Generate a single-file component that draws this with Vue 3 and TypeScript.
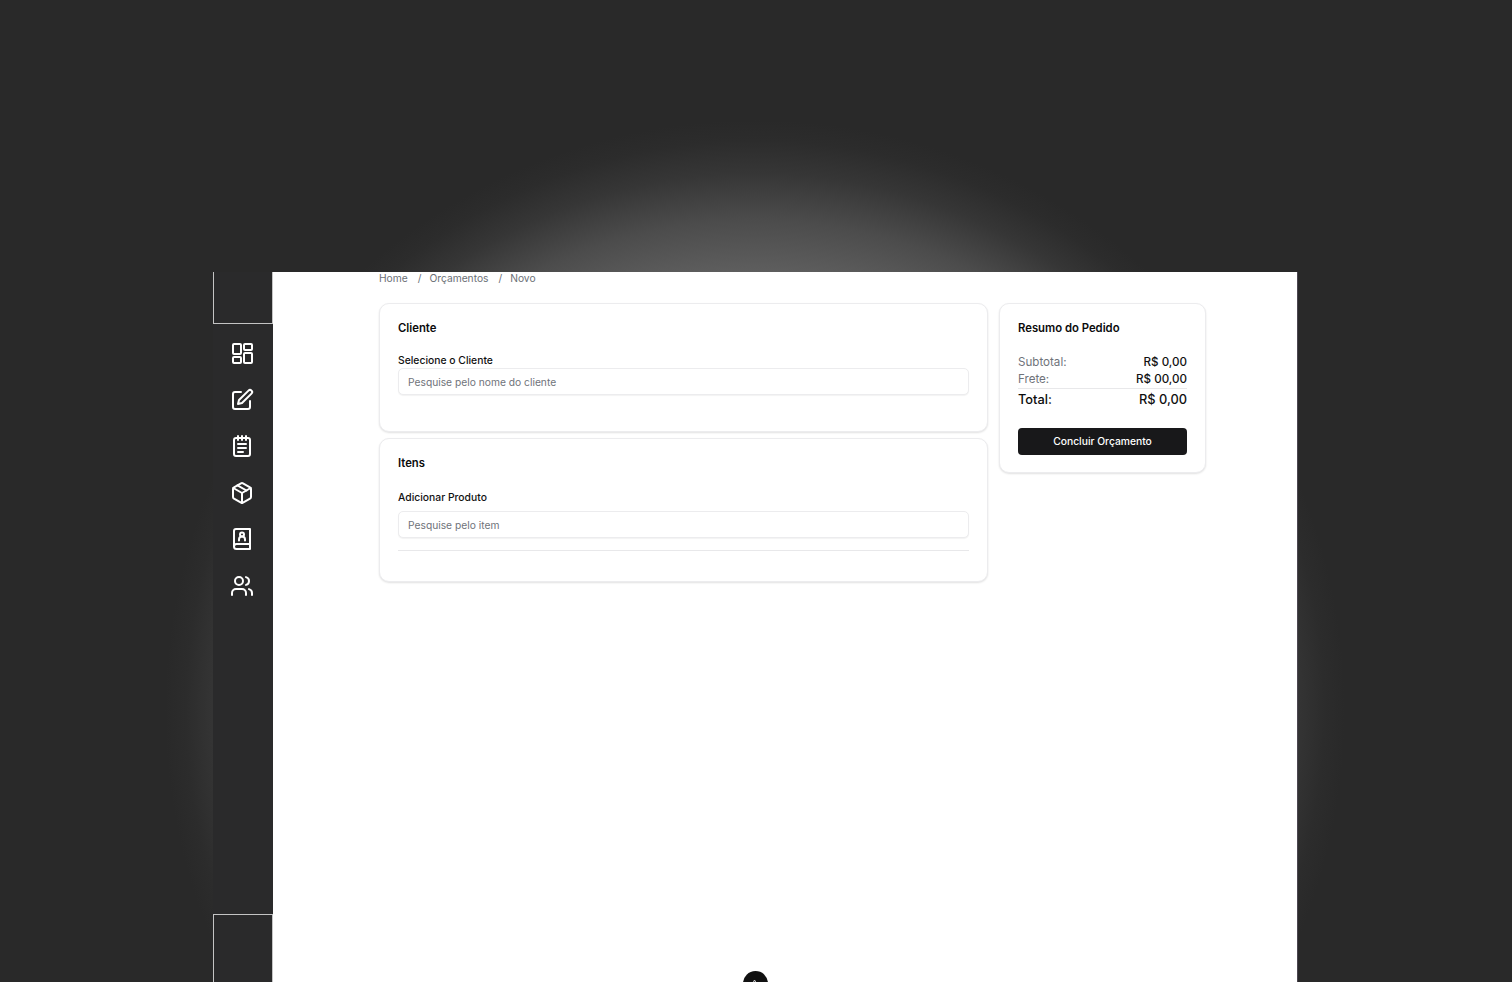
<script setup lang="ts">
const navIcons = [
  ['M4 3h6a1 1 0 0 1 1 1v8a1 1 0 0 1-1 1H4a1 1 0 0 1-1-1V4a1 1 0 0 1 1-1Z', 'M15 3h6a1 1 0 0 1 1 1v4a1 1 0 0 1-1 1h-6a1 1 0 0 1-1-1V4a1 1 0 0 1 1-1Z', 'M15 12h6a1 1 0 0 1 1 1v8a1 1 0 0 1-1 1h-6a1 1 0 0 1-1-1v-8a1 1 0 0 1 1-1Z', 'M4 16h6a1 1 0 0 1 1 1v4a1 1 0 0 1-1 1H4a1 1 0 0 1-1-1v-4a1 1 0 0 1 1-1Z'],
  ['M11 4H5a2 2 0 0 0-2 2v13a2 2 0 0 0 2 2h13a2 2 0 0 0 2-2v-6', 'M18.5 2.6a2.1 2.1 0 0 1 3 3L12 15l-4 1 1-4Z'],
  ['M8 2v4', 'M12 2v4', 'M16 2v4', 'M6 4h12a2 2 0 0 1 2 2v14a2 2 0 0 1-2 2H6a2 2 0 0 1-2-2V6a2 2 0 0 1 2-2Z', 'M8 10h8', 'M8 14h8', 'M8 18h5'],
  ['M11 2.3a2 2 0 0 1 2 0l7 4A2 2 0 0 1 21 8v8a2 2 0 0 1-1 1.7l-7 4a2 2 0 0 1-2 0l-7-4A2 2 0 0 1 3 16V8a2 2 0 0 1 1-1.7Z', 'M3.3 7 12 12l8.7-5', 'M12 22V12', 'm7.5 4.3 9 5.2'],
  ['M4 19.5V4a2 2 0 0 1 2-2h14v20H6.5a2.5 2.5 0 0 1 0-5H20', 'M9 13.5v-1a3 3 0 0 1 6 0v1', 'M12 5.5a2 2 0 1 0 0 4 2 2 0 0 0 0-4Z'],
  ['M16 21v-2a4 4 0 0 0-4-4H6a4 4 0 0 0-4 4v2', 'M9 3a4 4 0 1 0 0 8 4 4 0 0 0 0-8Z', 'M22 21v-2a4 4 0 0 0-3-3.87', 'M16 3.13a4 4 0 0 1 0 7.75'],
]
</script>

<template>
  <div class="page">
    <div class="glow"></div>
    <div class="frame">
      <aside class="sidebar">
        <div class="slot slot-top"></div>
        <nav class="nav">
          <svg v-for="(icon, i) in navIcons" :key="i" class="nav-icon" viewBox="0 0 24 24" fill="none" stroke="currentColor" stroke-width="2" stroke-linecap="round" stroke-linejoin="round">
            <path v-for="d in icon" :key="d" :d="d" />
          </svg>
        </nav>
        <div class="slot slot-bottom"></div>
      </aside>
      <main class="main">
        <div class="crumbs">
          <span>Home</span><i>/</i><span>Orçamentos</span><i>/</i><span>Novo</span>
        </div>
        <div class="columns">
          <div class="left">
            <section class="card card-client">
              <h2>Cliente</h2>
              <label class="label-client">Selecione o Cliente</label>
              <input class="field" placeholder="Pesquise pelo nome do cliente" />
            </section>
            <section class="card card-items">
              <h2>Itens</h2>
              <label class="label-items">Adicionar Produto</label>
              <input class="field" placeholder="Pesquise pelo item" />
              <hr class="rule" />
            </section>
          </div>
          <section class="card card-summary">
            <h2>Resumo do Pedido</h2>
            <div class="rows">
              <div class="row"><span class="muted">Subtotal:</span><b>R$ 0,00</b></div>
              <div class="row"><span class="muted">Frete:</span><b>R$ 00,00</b></div>
              <div class="row total"><span>Total:</span><b>R$ 0,00</b></div>
            </div>
            <button class="submit">Concluir Orçamento</button>
          </section>
        </div>
        <div class="fab">
          <svg viewBox="0 0 24 24" fill="none" stroke="#d8d8d8" stroke-width="2"><path d="M3 20 9 8l4 7 2-3 5 8" /></svg>
        </div>
      </main>
    </div>
  </div>
</template>

<style>
html, body { margin: 0; background: #292929; overflow: hidden; }
</style>

<style scoped>
.page {
  position: relative;
  height: 982px;
  padding: 272px 215px 0 213px;
  box-sizing: border-box;
  overflow: hidden;
  background: #292929;
  font-family: Inter, "Noto Sans", sans-serif;
}
.glow {
  position: absolute;
  left: 165px;
  top: 120px;
  width: 1180px;
  height: 1180px;
  border-radius: 50%;
  background: radial-gradient(circle closest-side, #707070 0%, #666666 70%, #5e5e5e 74.2%, #4c4c4c 83%, #363636 91%, #2c2c2c 96.5%, #292929 100%);
}
.frame {
  position: relative;
  display: flex;
  height: 710px;
}
.sidebar {
  width: 60px;
  flex: none;
  display: flex;
  flex-direction: column;
  background: #2a2a2b;
  color: #fff;
}
.slot {
  box-sizing: border-box;
  width: 60px;
  flex: none;
  border: 1px solid #c4c4c4;
}
.slot-top { height: 52px; border-top: 0; }
.slot-bottom { height: 68px; border-bottom: 0; }
.nav {
  flex: 1;
  display: flex;
  flex-direction: column;
  align-items: center;
  gap: 22.6px;
  padding: 17px 2px 0 0;
}
.nav-icon { width: 24px; height: 24px; flex: none; }
.main {
  position: relative;
  flex: 1;
  background: #fff;
  padding-left: 106px;
  box-shadow: 1px 0 0 #4b4650;
}
.crumbs {
  height: 34px;
  margin-top: -3px;
  font-size: 10.25px;
  line-height: 18px;
  color: #6b6f76;
  display: flex;
  gap: 10px;
}
.crumbs i { font-style: normal; margin-right: -2px; }
.columns { display: flex; gap: 11px; align-items: flex-start; }
.left { width: 609px; display: flex; flex-direction: column; gap: 6px; }
.card {
  box-sizing: border-box;
  border: 1px solid #ececee;
  border-radius: 10px;
  background: #fff;
  box-shadow: 0 1px 2px rgba(0, 0, 0, 0.12);
  padding: 16px 18px 15px;
}
.card-client { height: 129px; }
.card-items { height: 144px; }
.card-summary { width: 207px; height: 170px; }
h2 { margin: 0; font-size: 11.3px; line-height: 17px; font-weight: 600; color: #0b0b0c; }
label { display: block; font-size: 10.35px; line-height: 16px; font-weight: 500; color: #111; }
.label-client { margin-top: 15px; }
.label-items { margin-top: 17px; margin-bottom: 6px; }
.field {
  display: block;
  box-sizing: border-box;
  width: 100%;
  height: 27px;
  padding: 0 9px;
  border: 1px solid #ececee;
  border-radius: 5px;
  background: #fff;
  box-shadow: 0 1px 1px rgba(0, 0, 0, 0.05);
  font: 400 10.25px Inter, sans-serif;
  outline: none;
}
.field::placeholder { color: #6f737a; opacity: 1; }
.rule { border: 0; border-top: 1px solid #e8e8ea; margin: 12px 0 0; }
.rows { margin-top: 16px; }
.row { display: flex; justify-content: space-between; align-items: center; height: 17.5px; font-size: 11.6px; }
.row b { font-weight: 500; color: #111; }
.muted { color: #6f737a; }
.total { height: 20px; border-top: 1px solid #e8e8ea; font-size: 12.8px; color: #0b0b0c; }
.total span { font-weight: 500; }
.submit {
  display: block;
  width: 100%;
  height: 27px;
  margin-top: 19px;
  padding: 0 0 2px;
  border: 0;
  border-radius: 4px;
  background: #18181a;
  color: #fff;
  font: 500 10.3px Inter, sans-serif;
}
.fab {
  position: absolute;
  left: 470px;
  top: 699px;
  width: 25px;
  height: 25px;
  border-radius: 50%;
  background: #111;
  display: flex;
  justify-content: center;
  padding-top: 5px;
  box-sizing: border-box;
}
.fab svg { width: 12px; height: 12px; }
</style>
